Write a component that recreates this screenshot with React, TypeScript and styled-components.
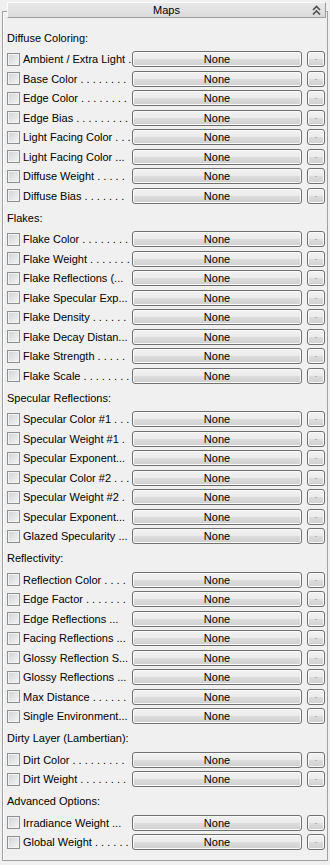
import React from 'react'
import styled, {createGlobalStyle} from 'styled-components'

const GlobalStyle = createGlobalStyle`
    html, body {
        margin: 0;
        padding: 0;
        background: #f0f0f0;
    }
    body {
        font-family: "Liberation Sans", Arial, sans-serif;
        font-size: 11px;
        color: #000;
    }
`

type Section = {title: string, items: [string, number][]}

// [label, number of leader dots]
const sections: Section[] = [
    {title: 'Diffuse Coloring:', items: [
        ['Ambient / Extra Light', 1],
        ['Base Color', 8],
        ['Edge Color', 8],
        ['Edge Bias', 9],
        ['Light Facing Color', 3],
        ['Light Facing Color ...', 0],
        ['Diffuse Weight', 5],
        ['Diffuse Bias', 7],
    ]},
    {title: 'Flakes:', items: [
        ['Flake Color', 8],
        ['Flake Weight', 7],
        ['Flake Reflections (...', 0],
        ['Flake Specular Exp...', 0],
        ['Flake Density', 6],
        ['Flake Decay Distan...', 0],
        ['Flake Strength', 5],
        ['Flake Scale', 8],
    ]},
    {title: 'Specular Reflections:', items: [
        ['Specular Color #1', 3],
        ['Specular Weight #1', 1],
        ['Specular Exponent...', 0],
        ['Specular Color #2', 3],
        ['Specular Weight #2', 1],
        ['Specular Exponent...', 0],
        ['Glazed Specularity ...', 0],
    ]},
    {title: 'Reflectivity:', items: [
        ['Reflection Color', 4],
        ['Edge Factor', 7],
        ['Edge Reflections ...', 0],
        ['Facing Reflections ...', 0],
        ['Glossy Reflection S...', 0],
        ['Glossy Reflections ...', 0],
        ['Max Distance', 6],
        ['Single Environment...', 0],
    ]},
    {title: 'Dirty Layer (Lambertian):', items: [
        ['Dirt Color', 9],
        ['Dirt Weight', 8],
    ]},
    {title: 'Advanced Options:', items: [
        ['Irradiance Weight ...', 0],
        ['Global Weight', 6],
    ]},
]

function Chevrons() {
    return (
        <svg width="9" height="10" viewBox="0 0 9 10">
            <polyline points="1,5 4.5,1.5 8,5" fill="none" stroke="#505050" strokeWidth="1.6" />
            <polyline points="1,9.5 4.5,6 8,9.5" fill="none" stroke="#505050" strokeWidth="1.6" />
        </svg>
    )
}

function MapRow({name, dots}: {name: string, dots: number}) {
    return (
        <Row>
            <Check />
            <Label>{name + ' .'.repeat(dots)}</Label>
            <MapButton>None</MapButton>
            <ClearButton>-</ClearButton>
        </Row>
    )
}

function App() {
    return (
        <>
            <GlobalStyle />
            <Frame>
                <Header>
                    <span />
                    <Title>Maps</Title>
                    <Toggle><Chevrons /></Toggle>
                </Header>
                <Content>
                    {sections.map(s => (
                        <div key={s.title}>
                            <SectionTitle>{s.title}</SectionTitle>
                            {s.items.map(([name, dots], i) => <MapRow key={i} name={name} dots={dots} />)}
                        </div>
                    ))}
                </Content>
            </Frame>
        </>
    )
}

const Frame = styled.div`
    margin: 11px 2px 0 2px;
    border: 1px solid #a0a0a0;
    box-shadow: inset 1px 1px 0 #fff;
    padding-bottom: 8px;
`
const Header = styled.div`
    position: relative;
    margin: -10px 1px 0 4px;
    height: 14px;
    display: grid;
    grid-template-columns: 1fr auto 1fr;
    align-items: center;
    background: linear-gradient(#e8e8e8, #dadada);
    border: 1px solid;
    border-color: #fcfcfc #9a9a9a #9a9a9a #fcfcfc;
`
const Title = styled.span`
    line-height: 14px;
`
const Toggle = styled.span`
    justify-self: end;
    display: flex;
    margin-right: 4px;
`
const Content = styled.div`
    padding: 7.5px 2px 0 4px;
`
const SectionTitle = styled.div`
    height: 24px;
    display: flex;
    align-items: center;
`
const Row = styled.div`
    height: 19.5px;
    display: flex;
    align-items: center;
`
const Check = styled.span`
    width: 11px;
    height: 11px;
    flex: none;
    border: 1px solid #8e8f8f;
    background: linear-gradient(135deg, #cfd1d4, #f6f6f6);
    box-shadow: inset 0 0 0 1px #f2f2f2;
`
const Label = styled.div`
    width: 108px;
    margin: 0 1px 0 3px;
    white-space: nowrap;
    overflow: hidden;
`
const MapButton = styled.button`
    width: 170px;
    height: 16px;
    padding: 0;
    font: inherit;
    color: #000;
    border: 1px solid #707070;
    border-radius: 3px;
    background: linear-gradient(#f2f2f2, #ebebeb 50%, #dddddd 50%, #cfcfcf);
    box-shadow: inset 0 0 0 1px #fafafa;
`
const ClearButton = styled(MapButton)`
    width: 18px;
    margin-left: 5px;
    color: #a8a8a8;
    font-size: 9px;
`

export default App
